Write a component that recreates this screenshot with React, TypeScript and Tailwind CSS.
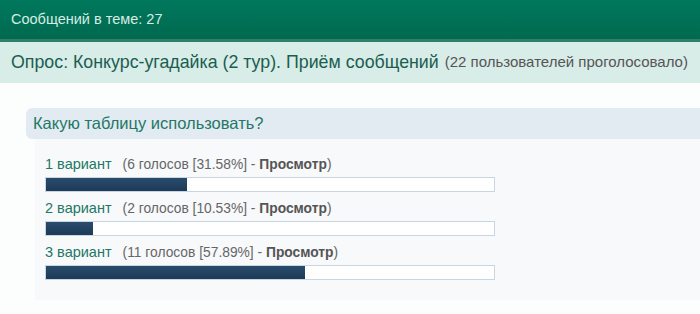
import React from 'react';

const options = [
  { label: '1 вариант', votes: '6 голосов', pct: 31.58 },
  { label: '2 вариант', votes: '2 голосов', pct: 10.53 },
  { label: '3 вариант', votes: '11 голосов', pct: 57.89 },
];

export default function App() {
  return (
    <div className="w-[700px] h-[314px] bg-[#fcfdfd] font-['Liberation_Sans',Arial,sans-serif] overflow-hidden">
      {/* Header */}
      <div className="h-[39px] bg-gradient-to-b from-[#00785c] to-[#006a50] flex items-center px-[11px]">
        <span className="text-[14.5px] text-[#d6ece4]">Сообщений в теме: 27</span>
      </div>
      <div className="h-[3px] bg-[#2f7f6c]" />

      {/* Poll title */}
      <div className="h-[41px] bg-[#d8ece8] flex items-center px-[11px] gap-[6px] whitespace-nowrap">
        <span className="text-[17.8px] text-[#1b5e50]">Опрос: Конкурс-угадайка (2 тур). Приём сообщений</span>
        <span className="text-[15px] text-[#555]">(22 пользователей проголосовало)</span>
      </div>

      {/* Question */}
      <div className="pt-[25px] pl-[26px]">
        <div className="h-[31px] bg-[#e2eaf2] rounded-l-[6px] flex items-center pl-[7px]">
          <span className="text-[16.5px] text-[#247766]">Какую таблицу использовать?</span>
        </div>
        <div className="ml-[9px] bg-[#f7f9fb] h-[161px] pl-[10px] pt-[16px] flex flex-col gap-[7px]">
          {options.map((o) => (
            <div key={o.label} className="flex flex-col gap-[4px]">
              <div className="h-[18px] flex items-baseline whitespace-nowrap leading-[18px]">
                <span className="text-[14.5px] text-[#237765]">{o.label}</span>
                <span className="text-[#666] text-[13.8px] ml-[11px]">
                  ({o.votes} [{o.pct.toFixed(2)}%] - <b className="text-[#555]">Просмотр</b>)
                </span>
              </div>
              <div className="w-[450px] h-[15px] border border-[#c8d6e2] bg-white">
                <div
                  className="h-full bg-gradient-to-b from-[#2a4c6c] to-[#1d3a58]"
                  style={{ width: `${o.pct}%` }}
                />
              </div>
            </div>
          ))}
        </div>
      </div>
    </div>
  );
}
